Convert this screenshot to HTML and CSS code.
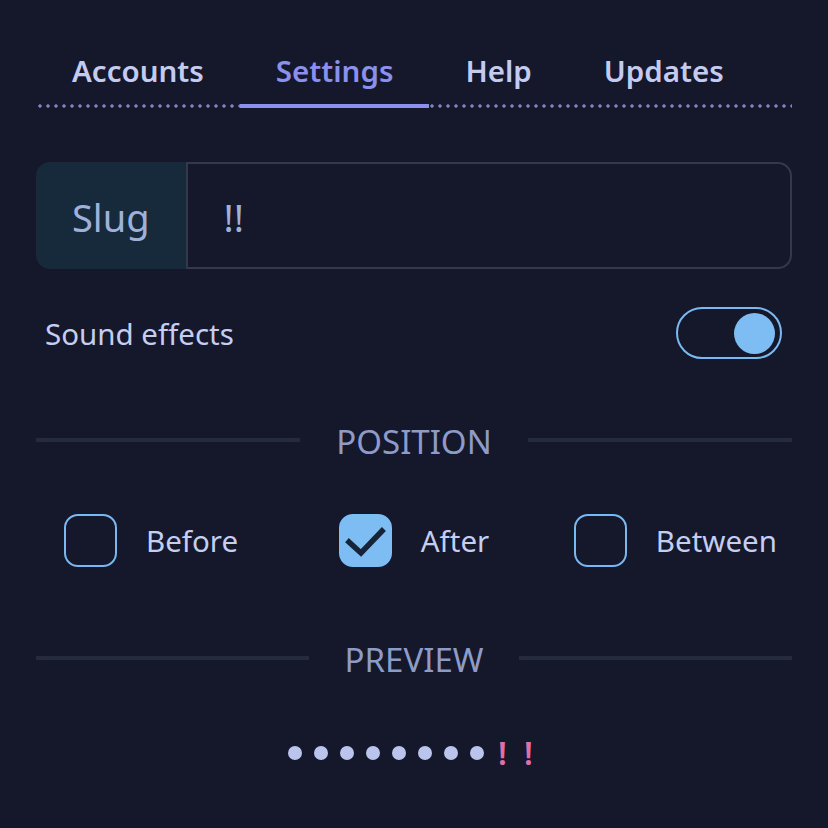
FILE: index.html
```html
<!DOCTYPE html>
<html lang="en">
<head>
<meta charset="utf-8">
<title>Settings</title>
<link rel="stylesheet" href="styles.css">
</head>
<body>
<div class="panel">
  <nav class="tabs">
    <a class="tab">Accounts</a>
    <a class="tab active">Settings</a>
    <a class="tab">Help</a>
    <a class="tab">Updates</a>
  </nav>

  <div class="field">
    <span class="addon">Slug</span>
    <span class="input">!!</span>
  </div>

  <div class="row-toggle">
    <span class="row-label">Sound effects</span>
    <span class="toggle"><span class="knob"></span></span>
  </div>

  <div class="divider divider-position"><span>POSITION</span></div>

  <div class="choices">
    <label class="choice choice-first"><span class="box"></span><span class="choice-label">Before</span></label>
    <label class="choice choice-mid"><span class="box checked"><svg viewBox="0 0 52 52" width="52" height="52"><path d="M10 28 L22 39 L43 17" fill="none" stroke="#172438" stroke-width="5.5" stroke-linecap="square" stroke-linejoin="miter"/></svg></span><span class="choice-label">After</span></label>
    <label class="choice choice-last"><span class="box"></span><span class="choice-label">Between</span></label>
  </div>

  <div class="divider divider-preview"><span>PREVIEW</span></div>

  <div class="preview">
    <span class="dot"></span><span class="dot"></span><span class="dot"></span><span class="dot"></span><span class="dot"></span><span class="dot"></span><span class="dot"></span><span class="dot"></span><span class="bang">!</span><span class="bang">!</span>
  </div>
</div>
</body>
</html>
```

FILE: styles.css
```css
html, body {
  margin: 0;
  padding: 0;
  background: #14182a;
}

body {
  font-family: "Noto Sans", "Open Sans", sans-serif;
  color: #c5cdf3;
}

.panel {
  padding: 42px 36px 0 36px;
}

.tabs {
  display: flex;
  height: 66px;
  background-image: radial-gradient(circle, #7f86c8 1.4px, transparent 1.9px);
  background-size: 8px 4px;
  background-repeat: repeat-x;
  background-position: 0 bottom;
}

.tab {
  padding: 0 36px;
  font-size: 29.5px;
  font-weight: 600;
  line-height: 58px;
  color: #c3cbf1;
  cursor: pointer;
}

.tab.active {
  color: #8a8ff0;
  border-bottom: 4px solid #8a8ff0;
  height: 62px;
}

.field {
  display: flex;
  margin-top: 54px;
  height: 107px;
}

.addon {
  display: flex;
  align-items: center;
  padding: 2px 36px 0;
  background: #172a3b;
  color: #9fb1db;
  font-size: 38px;
  border-radius: 14px 0 0 14px;
}

.input {
  flex: 1;
  display: flex;
  align-items: center;
  padding: 2px 0 0 36px;
  border: 2px solid #33384d;
  border-radius: 0 14px 14px 0;
  color: #9fb1db;
  font-size: 38px;
}

.row-toggle {
  display: flex;
  align-items: center;
  justify-content: space-between;
  margin-top: 38px;
  padding: 0 10px 0 9px;
}

.row-label {
  font-size: 29.5px;
}

.toggle {
  box-sizing: border-box;
  width: 106px;
  height: 52px;
  border: 2px solid #7ab9f1;
  border-radius: 26px;
  display: flex;
  align-items: center;
  justify-content: flex-end;
  padding-right: 5px;
}

.knob {
  width: 41px;
  height: 41px;
  border-radius: 50%;
  background: #7dbdf3;
}

.divider {
  display: flex;
  align-items: center;
  gap: 36px;
  color: #8e9bc9;
  font-size: 33px;
}

.divider::before,
.divider::after {
  content: "";
  flex: 1;
  height: 4px;
  background: #252a3d;
}

.divider > span {
  position: relative;
  top: 2px;
}

.divider-position {
  margin-top: 58px;
}

.divider-preview {
  margin-top: 68px;
}

.choices {
  display: grid;
  grid-template-columns: repeat(3, 1fr);
  align-items: center;
  margin-top: 52px;
}

.choice {
  display: flex;
  align-items: center;
  gap: 29px;
  font-size: 29.5px;
  cursor: pointer;
}

.choice-first {
  justify-self: start;
  margin-left: 28px;
}

.choice-mid {
  justify-self: center;
}

.choice-last {
  justify-self: end;
  margin-right: 15px;
}

.box {
  box-sizing: border-box;
  width: 53px;
  height: 53px;
  border: 2px solid #79b8f0;
  border-radius: 14px;
  display: block;
}

.box.checked {
  background: #7dbdf3;
  border-color: #7dbdf3;
}

.box.checked svg {
  display: block;
  margin: -2px;
}

.preview {
  display: flex;
  justify-content: center;
  align-items: center;
  margin-top: 53px;
  height: 40px;
  padding-right: 5px;
}

.dot {
  width: 14px;
  height: 14px;
  border-radius: 50%;
  background: #bac4ec;
  margin: 0 6px;
}

.bang {
  width: 26px;
  text-align: center;
  color: #e06fa8;
  font-size: 32px;
  font-weight: 600;
  line-height: 40px;
}
```
